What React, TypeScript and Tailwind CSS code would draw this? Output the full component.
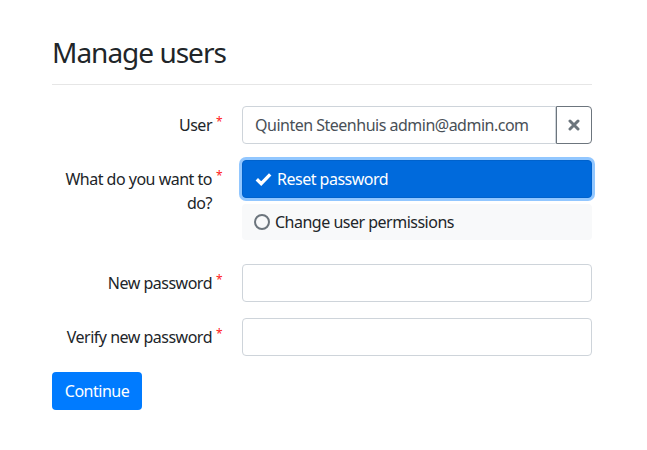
import React from "react";

const font = { fontFamily: '"Noto Sans", "Open Sans", Arial, sans-serif' };

function Label({ children }: { children: React.ReactNode }) {
  return (
    <div className="w-[160px] shrink-0 text-right text-[16px] leading-6 tracking-[-0.5px] text-[#212529] pt-[7px]">
      <span className="relative">
        {children}
        <span className="absolute -right-[10px] -top-[4px] text-[12px] text-[#ff1a1a]">*</span>
      </span>
    </div>
  );
}

export default function App() {
  return (
    <div className="min-h-[450px] bg-white" style={font}>
      <div className="w-[540px] ml-[52px] pt-[35px]">
        <h3 className="text-[28px] leading-[34px] font-normal text-[#212529] tracking-[-1px]">Manage users</h3>
        <div className="mt-[15px] h-px bg-[#e6e6e6]" />

        <div className="mt-[21px] flex">
          <Label>User</Label>
          <div className="ml-[30px] flex min-w-0 flex-1">
            <div className="flex h-[38px] min-w-0 flex-1 items-center whitespace-nowrap rounded-l-[4px] border border-[#ced4da] px-3 text-[16px] tracking-[-0.5px] text-[#495057]">
              Quinten Steenhuis admin@admin.com
            </div>
            <div className="flex h-[38px] w-[36px] items-center justify-center rounded-r-[4px] border border-[#6c757d]">
              <svg width="12" height="12" viewBox="0 0 12 12">
                <path d="M2 2 L10 10 M10 2 L2 10" stroke="#6c757d" strokeWidth="3" strokeLinecap="round" />
              </svg>
            </div>
          </div>
        </div>

        <div className="mt-[16px] flex">
          <Label>
            What do you want to
            <br />
            do?
          </Label>
          <div className="ml-[30px] flex flex-1 flex-col">
            <div className="flex h-[38px] items-center gap-[5px] rounded-[4px] border border-[#0062cc] bg-[#006adc] px-3 text-[16px] tracking-[-0.5px] text-white shadow-[0_0_0_3px_rgba(38,143,255,0.5)]">
              <svg width="17" height="14" viewBox="0 0 17 14">
                <path d="M1.8 7.2 L6.2 11.6 L15.2 2.4" stroke="white" strokeWidth="3.4" fill="none" strokeLinejoin="miter" />
              </svg>
              Reset password
            </div>
            <div className="mt-[6px] flex h-[36px] items-center gap-[5px] rounded-[4px] bg-[#f8f9fa] px-3 text-[16px] tracking-[-0.5px] text-[#212529]">
              <span className="inline-block h-[16px] w-[16px] rounded-full border-[2px] border-[#6c757d]" />
              Change user permissions
            </div>
          </div>
        </div>

        <div className="mt-[24px] flex">
          <Label>New password</Label>
          <div className="ml-[30px] h-[38px] flex-1 rounded-[4px] border border-[#ced4da]" />
        </div>

        <div className="mt-[16px] flex">
          <Label>Verify new password</Label>
          <div className="ml-[30px] h-[38px] flex-1 rounded-[4px] border border-[#ced4da]" />
        </div>

        <button className="mt-[16px] h-[38px] w-[90px] rounded-[4px] bg-[#007bff] text-[16px] tracking-[-0.5px] text-white">
          Continue
        </button>
      </div>
    </div>
  );
}
